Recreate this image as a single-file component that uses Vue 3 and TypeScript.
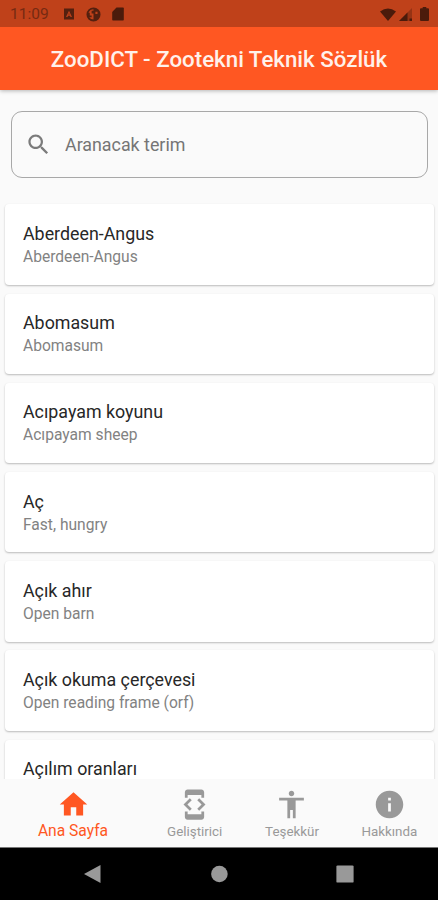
<script setup lang="ts">
interface Term {
  tr: string
  en?: string
}

interface Tab {
  label: string
  icon: string
  active?: boolean
}

const terms: Term[] = [
  { tr: 'Aberdeen-Angus', en: 'Aberdeen-Angus' },
  { tr: 'Abomasum', en: 'Abomasum' },
  { tr: 'Acıpayam koyunu', en: 'Acıpayam sheep' },
  { tr: 'Aç', en: 'Fast, hungry' },
  { tr: 'Açık ahır', en: 'Open barn' },
  { tr: 'Açık okuma çerçevesi', en: 'Open reading frame (orf)' },
  { tr: 'Açılım oranları' },
]

const tabs: Tab[] = [
  { label: 'Ana Sayfa', active: true, icon: 'M10 20v-6h4v6h5v-8h3L12 3 2 12h3v8z' },
  {
    label: 'Geliştirici',
    icon: 'M7 5h10v2h2V3c0-1.1-.9-1.99-2-1.99L7 1c-1.1 0-2 .9-2 2v4h2V5zm8.41 11.59L20 12l-4.59-4.59L14 8.83 17.17 12 14 15.17l1.41 1.42zM10 15.17L6.83 12 10 8.83 8.59 7.41 4 12l4.59 4.59L10 15.17zM17 19H7v-2H5v4c0 1.1.9 2 2 2h10c1.1 0 2-.9 2-2v-4h-2v2z',
  },
  {
    label: 'Teşekkür',
    icon: 'M12 2c1.1 0 2 .9 2 2s-.9 2-2 2-2-.9-2-2 .9-2 2-2zm9 7h-6v13h-2v-6h-2v6H9V9H3V7h18v2z',
  },
  {
    label: 'Hakkında',
    icon: 'M12 2C6.48 2 2 6.48 2 12s4.48 10 10 10 10-4.48 10-10S17.52 2 12 2zm1 15h-2v-6h2v6zm0-8h-2V7h2v2z',
  },
]
</script>

<template>
  <div class="screen">
    <header class="top">
      <div class="status">
        <span class="clock">11:09</span>
        <svg class="s-app" viewBox="0 0 12 12"><path fill-rule="evenodd" d="M1 .5h10v11H1zM6 2.700 3 9h1.500l.5-1.200h2L7.500 9H9zM6 5l.6 1.500H5.400z" /></svg>
        <svg class="s-round" viewBox="0 0 16 16"><path fill-rule="evenodd" d="M8 .5a7.500 7.500 0 1 0 0 15 7.500 7.500 0 0 0 0-15zM2.600 6q1.800-3.600 5.400-3.600V4H6v3h2v6.400q-3 0-4.600-2.400H6V9H4V6zM10 5h2.300v2.500H10z" /></svg>
        <svg class="s-card" viewBox="0 0 12 14"><path d="M4.500.5H11q.8 0 .8.8v11.400q0 .8-.8.8H1q-.8 0-.8-.8V5z" /></svg>
        <span class="spacer"></span>
        <svg class="s-wifi" viewBox="0 0 16 13"><path d="M0 3.500Q8-2.500 16 3.500L8 13z" /></svg>
        <svg class="s-signal" viewBox="0 0 13 13"><path opacity=".35" d="M0 13 13 0v13z" /><path d="M0 13 8.500 4.500V13zM10.500 10.500H13V13h-2.500z" /></svg>
        <svg class="s-battery" viewBox="0 0 9 14"><path d="M2.700 0h3.600v1.300H8q1 0 1 1V13q0 1-1 1H1q-1 0-1-1V2.300q0-1 1-1h1.700z" /></svg>
      </div>
      <h1 class="title">ZooDICT - Zootekni Teknik Sözlük</h1>
    </header>

    <main class="body">
      <label class="search">
        <svg viewBox="0 0 24 24"><path d="M15.500 14h-.79l-.28-.27C15.410 12.590 16 11.110 16 9.500 16 5.910 13.090 3 9.500 3S3 5.910 3 9.500 5.910 16 9.500 16c1.610 0 3.090-.59 4.230-1.570l.27.28v.79l5 4.990L20.490 19l-4.990-5zm-6 0C7.010 14 5 11.990 5 9.500S7.010 5 9.500 5 14 7.010 14 9.500 11.990 14 9.500 14z" /></svg>
        <input type="text" placeholder="Aranacak terim" />
      </label>
      <ul class="list">
        <li v-for="term in terms" :key="term.tr" class="card">
          <span class="tr">{{ term.tr }}</span>
          <span v-if="term.en" class="en">{{ term.en }}</span>
        </li>
      </ul>
    </main>

    <nav class="tabs">
      <a v-for="tab in tabs" :key="tab.label" class="tab" :class="{ active: tab.active }">
        <svg viewBox="0 0 24 24"><path :d="tab.icon" /></svg>
        <span>{{ tab.label }}</span>
      </a>
    </nav>

    <footer class="system">
      <svg viewBox="0 0 20 20"><path d="M17.500 1v18L1 10z" /></svg>
      <svg viewBox="0 0 20 20"><circle cx="10.400" cy="10" r="8.300" /></svg>
      <svg viewBox="0 0 20 20"><rect x="1.400" y="1.400" width="17.200" height="17.200" rx="1.200" /></svg>
    </footer>
  </div>
</template>

<style>
body {
  margin: 0;
  overflow: hidden;
}
</style>

<style scoped>
.screen {
  display: flex;
  flex-direction: column;
  width: 438px;
  height: 900px;
  overflow: hidden;
  background: #fafafa;
  font-family: Roboto, "Liberation Sans", sans-serif;
}
svg {
  display: block;
  flex: none;
  fill: currentColor;
}
.top {
  z-index: 1;
  flex: none;
  height: 89.600px;
  background: #ff5722;
  box-shadow: 0 1px 4px rgba(0, 0, 0, 0.28);
}
.status {
  display: flex;
  align-items: center;
  box-sizing: border-box;
  height: 27px;
  padding: 1px 9px 0 10px;
  background: #bf411a;
  color: #54200f;
}
.clock {
  width: 53px;
  font-size: 15.500px;
  line-height: 18px;
  color: #762a12;
}
.s-app { width: 12px; height: 12px; }
.s-round { width: 15px; height: 15px; margin-left: 11px; }
.s-card { width: 12px; height: 14px; margin-left: 11px; }
.spacer { flex: 1; }
.s-wifi { width: 16px; height: 13px; }
.s-signal { width: 13px; height: 13px; margin-left: 3px; }
.s-battery { width: 9px; height: 14px; margin-left: 8px; }
.s-wifi, .s-signal, .s-battery, .s-card { color: #4b1b0b; }
.title {
  margin: 0;
  font-size: 22.300px;
  font-weight: 500;
  line-height: 64px;
  text-align: center;
  white-space: nowrap;
  color: #fff1eb;
}
.body {
  flex: 1;
  min-height: 0;
  overflow: hidden;
}
.search {
  display: flex;
  align-items: center;
  box-sizing: border-box;
  height: 66.500px;
  margin: 21.800px 10.500px 0 11px;
  padding-left: 13px;
  border: 1px solid #a8a8a8;
  border-radius: 11px;
  color: #7b7b7b;
}
.search svg {
  width: 27px;
  height: 27px;
}
.search input {
  flex: 1;
  min-width: 0;
  margin-left: 13px;
  padding: 0;
  border: 0;
  outline: 0;
  background: transparent;
  font: 17.840px/24px Roboto, sans-serif;
}
.search input::placeholder {
  color: #757575;
  opacity: 1;
}
.list {
  display: flex;
  flex-direction: column;
  gap: 8.920px;
  margin: 26.500px 4.500px 0 5.200px;
  padding: 0;
  list-style: none;
}
.card {
  display: flex;
  flex-direction: column;
  box-sizing: border-box;
  height: 80.300px;
  padding: 17.600px 17.800px 0;
  border-radius: 4px;
  background: #fff;
  box-shadow: 0 1px 2px rgba(0, 0, 0, 0.26);
}
.tr {
  font-size: 17.840px;
  line-height: 24px;
  color: #272727;
}
.en {
  font-size: 15.600px;
  line-height: 23px;
  color: #828282;
}
.tabs {
  display: flex;
  flex: none;
  height: 68px;
  background: #fafafa;
}
.tab {
  display: flex;
  flex: 1;
  flex-direction: column;
  align-items: center;
  padding-top: 9px;
  font-size: 13.380px;
  line-height: 16px;
  color: #999;
}
.tab svg {
  width: 33px;
  height: 33px;
}
.tab span {
  margin-top: 3px;
}
.tab.active {
  flex: 1.500;
  font-size: 15.610px;
  color: #ff5722;
}
.tab.active span {
  margin-top: 2px;
}
.system {
  display: flex;
  flex: none;
  align-items: center;
  justify-content: space-between;
  box-sizing: border-box;
  height: 53px;
  padding: 0 83px;
  border-top: 1px solid #777;
  background: #000;
  color: #999;
}
.system svg {
  width: 20px;
  height: 20px;
}
</style>
